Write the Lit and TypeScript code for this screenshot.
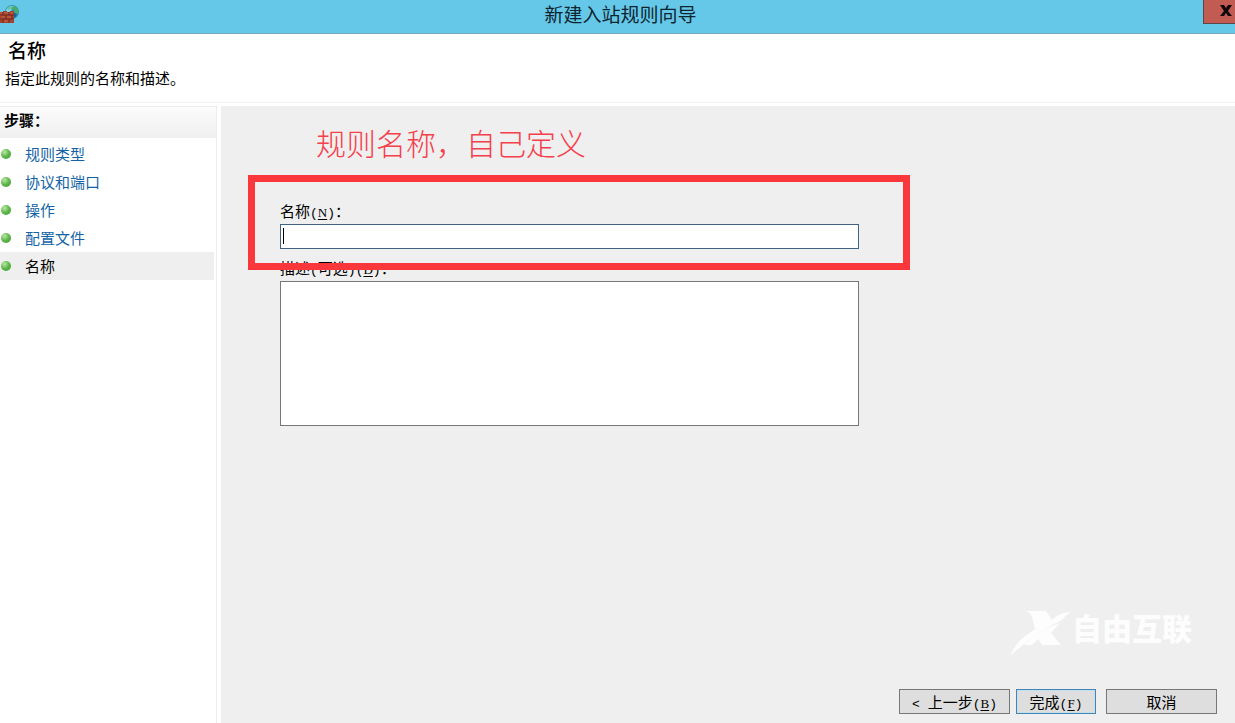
import { LitElement, html, css, svg } from "lit";
import { customElement, state } from "lit/decorators.js";
import { classMap } from "lit/directives/class-map.js";

const firewallIcon = html`
  <svg class="app-icon" viewBox="0 0 20 20" width="20" height="20" aria-hidden="true">
    <circle cx="12" cy="7" r="7" fill="#2f8fb8" />
    <path d="M6 5Q8 1 12 1Q15 1 16 3Q12 3 11 6L7 8Z" fill="#7fd3e6" />
    <path d="M12 2Q16 0 18 4Q19 7 18 9L15 8L14 5L11 4Z" fill="#49ab6b" />
    <path d="M7 3L10 1L12 2L9 5Z" fill="#67c39a" />
    <path d="M14 8L17 9Q16 12 14 13Z" fill="#1d5f96" />
    <path d="M0 7h3V6h4v1h3V6h4v12H0z" fill="#a5432f" />
    <path d="M0 10h14M0 14h14M3 7v3M9 7v3M6 10v4M12 10v4M3 14v4M9 14v4" stroke="#64241b" stroke-width="0.7" fill="none" />
    <path d="M0 8h2M4 8h4M10 8h3M1 12h4M7 12h4M4 16h4" stroke="#c8664c" fill="none" />
  </svg>
`;

const watermarkLogo = html`
  <svg class="watermark-logo" viewBox="0 0 64 48" width="64" height="48" aria-hidden="true">
    <path d="M17 2H38L44 11Q52 3 63 3Q58 6 54 11Q30 22 2 47Q6 36 16 28L27 20L24 8Q22 3 17 2Z" fill="#fdfdfd" />
    <path d="M52 14L43 24L53 36H34L30 30L24 36H16Q31 21 52 14Z" fill="#fdfdfd" />
  </svg>
`;

const closeGlyph = svg`<path d="M0 0h4l2 3 2-3h4L8 6l4 5H8L6 8l-2 3H0l4-5z" fill="#100808" />`;

interface Step {
  label: string;
  current?: boolean;
}

@customElement("wizard-steps")
class WizardSteps extends LitElement {
  static styles = css`
    :host {
      display: block;
      background: #fff;
      border-right: 1px solid #ececec;
      border-top: 1px solid #ececec;
    }
    .heading {
      margin: 0;
      padding: 0 4px 6px;
      font-size: 15px;
      line-height: 25px;
      font-weight: 700;
      background: linear-gradient(#fcfcfc, #efefef);
    }
    .list {
      list-style: none;
      margin: 2px 2px 0 0;
      padding: 0;
    }
    .step {
      display: flex;
      align-items: center;
      gap: 14px;
      height: 28px;
      padding-left: 1px;
    }
    .current {
      background: #efefef;
    }
    .dot {
      width: 10px;
      height: 10px;
      border-radius: 50%;
      background: radial-gradient(circle at 35% 30%, #b9e8a8, #5cb548 50%, #3d9a31);
    }
    .link {
      color: #1464a5;
      text-decoration: none;
    }
  `;

  steps: Step[] = [
    { label: "规则类型" },
    { label: "协议和端口" },
    { label: "操作" },
    { label: "配置文件" },
    { label: "名称", current: true },
  ];

  render() {
    return html`
      <h2 class="heading">步骤：</h2>
      <ol class="list">
        ${this.steps.map(
          (step) => html`
            <li class=${classMap({ step: true, current: !!step.current })}>
              <span class="dot"></span>
              ${step.current
                ? html`<span aria-current="step">${step.label}</span>`
                : html`<a class="link" href="#">${step.label}</a>`}
            </li>
          `
        )}
      </ol>
    `;
  }
}

@customElement("app-root")
class AppRoot extends LitElement {
  static styles = css`
    * {
      box-sizing: border-box;
    }
    :host {
      display: flex;
      flex-direction: column;
      min-height: 100vh;
      font-family: "Noto Sans CJK SC", sans-serif;
      font-size: 15px;
      line-height: 20px;
      color: #000;
      background: #fff;
    }
    .titlebar {
      display: grid;
      grid-template-columns: 32px 1fr 32px;
      align-items: start;
      height: 34px;
      background: #66c8e8;
      border-bottom: 1px solid #6fa9bb;
    }
    .app-icon {
      display: block;
      margin-top: 5px;
    }
    .title {
      margin: 0;
      padding-left: 6px;
      text-align: center;
      font-size: 19px;
      line-height: 28px;
      font-weight: 400;
      color: #0c2530;
    }
    .close {
      display: grid;
      place-items: center;
      height: 24px;
      padding: 0 0 2px 12px;
      border: 1px solid #5c4548;
      border-top: 0;
      border-right: 0;
      background: #c25b52;
    }
    .header {
      height: 68px;
      padding: 5px 5px 0;
    }
    .heading {
      margin: 0;
      padding-left: 3px;
      font-size: 19px;
      line-height: 22px;
      font-weight: 500;
    }
    .subtitle {
      margin: 7px 0 0;
    }
    .body {
      flex: 1;
      display: grid;
      grid-template-columns: 217px 1fr;
      column-gap: 4px;
      padding-top: 3px;
      border-top: 1px solid #f3f3f3;
    }
    .panel {
      position: relative;
      display: flex;
      flex-direction: column;
      padding: 16px 18px 9px 59px;
      background: #efefef;
    }
    .note {
      margin: 0 0 39px 36px;
      font-size: 30px;
      line-height: 40px;
      font-weight: 300;
      color: #f5404c;
    }
    .form {
      max-width: 579px;
    }
    .field {
      position: relative;
      display: flex;
      flex-direction: column;
    }
    .label {
      line-height: 20px;
      margin-bottom: 3px;
    }
    .box {
      width: 100%;
      height: 25px;
      margin: 0;
      padding: 2px 4px;
      border: 1px solid #3f6380;
      border-radius: 0;
      outline: 0;
      background: #fff;
      font: inherit;
    }
    .description {
      margin-top: 9px;
    }
    .area {
      display: block;
      height: 145px;
      border-color: #777;
      resize: none;
    }
    .caret {
      position: absolute;
      left: 3px;
      bottom: 5px;
      width: 1px;
      height: 16px;
      background: #000;
    }
    .frame {
      position: absolute;
      z-index: 1;
      inset: -26px -51px -21px -32px;
      border: 7px solid #fa373a;
      pointer-events: none;
    }
    .paren {
      font-family: "Liberation Mono", monospace;
      font-size: 13px;
      line-height: 0;
    }
    .key {
      font-family: "Liberation Serif", serif;
      font-size: 13px;
      line-height: 0;
      text-decoration: underline;
      text-underline-offset: 2px;
    }
    .watermark {
      position: absolute;
      right: 43px;
      bottom: 66px;
      display: flex;
      align-items: center;
      color: #fdfdfd;
      font-size: 30px;
      line-height: 48px;
      font-weight: 900;
    }
    .watermark-text {
      margin-bottom: 4px;
    }
    .watermark-logo {
      margin-top: 8px;
    }
    .actions {
      display: flex;
      justify-content: flex-end;
      gap: 6px;
      margin-top: auto;
    }
    .button {
      width: 111px;
      height: 25px;
      padding: 0;
      border: 1px solid #777;
      border-radius: 0;
      background: #dedede;
      color: #000;
      font: inherit;
    }
    .primary {
      width: 80px;
      margin-right: 4px;
      border-color: #4585b5;
      box-shadow: inset 0 0 0 1px #c5dfee;
    }
  `;

  @state() private name = "";

  private key(letter: string) {
    return html`<span class="paren">(</span><span class="key">${letter}</span><span class="paren">)</span>`;
  }

  render() {
    return html`
      <header class="titlebar">
        ${firewallIcon}
        <h1 class="title">新建入站规则向导</h1>
        <button class="close" aria-label="关闭">
          <svg width="12" height="12" viewBox="0 0 12 12" aria-hidden="true">${closeGlyph}</svg>
        </button>
      </header>
      <div class="header">
        <h2 class="heading">名称</h2>
        <p class="subtitle">指定此规则的名称和描述。</p>
      </div>
      <div class="body">
        <wizard-steps></wizard-steps>
        <main class="panel">
          <p class="note">规则名称，自己定义</p>
          <div class="form">
            <div class="field">
              <label class="label" for="name">名称${this.key("N")}：</label>
              <input
                class="box"
                id="name"
                type="text"
                .value=${this.name}
                @input=${(e: Event) => (this.name = (e.target as HTMLInputElement).value)}
              />
              <span class="caret"></span>
              <span class="frame"></span>
            </div>
            <div class="field description">
              <label class="label" for="description"
                >描述<span class="paren">(</span>可选<span class="paren">)</span>${this.key("D")}：</label
              >
              <textarea class="box area" id="description"></textarea>
            </div>
          </div>
          <div class="watermark">${watermarkLogo}<span class="watermark-text">自由互联</span></div>
          <div class="actions">
            <button class="button"><span class="paren">&lt; </span>上一步${this.key("B")}</button>
            <button class="button primary">完成${this.key("F")}</button>
            <button class="button">取消</button>
          </div>
        </main>
      </div>
    `;
  }
}
